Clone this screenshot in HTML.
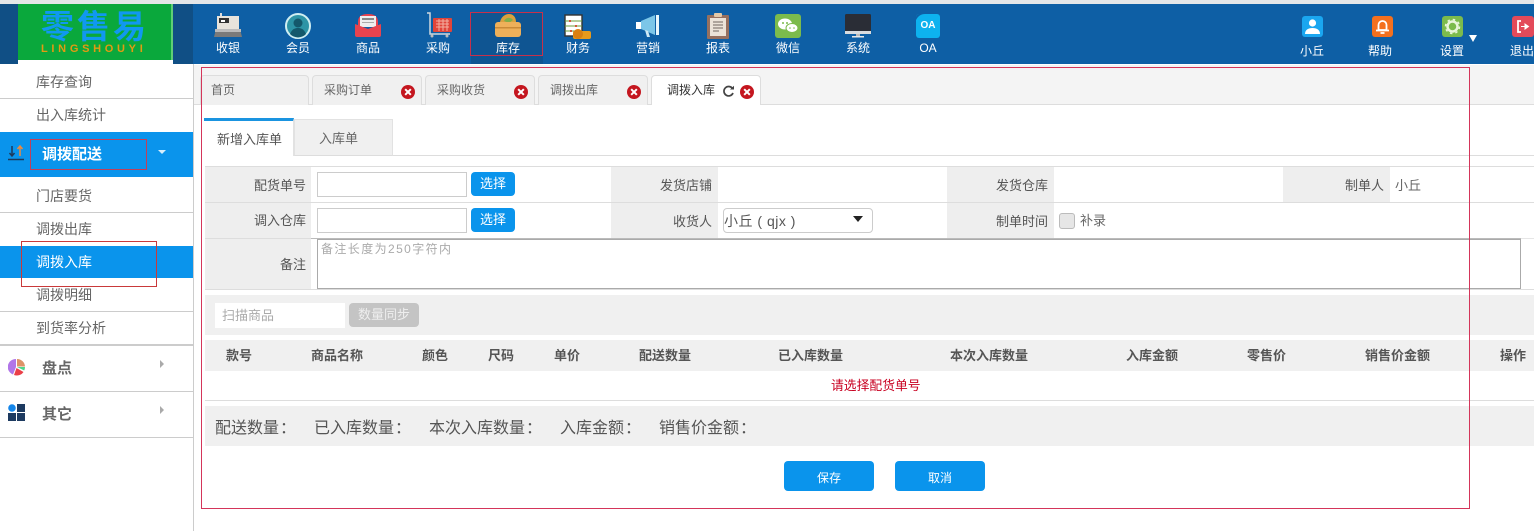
<!DOCTYPE html>
<html lang="zh"><head><meta charset="utf-8"><title>调拨入库</title>
<style>
*{box-sizing:border-box}
html,body{margin:0;padding:0;width:1534px;height:531px;overflow:hidden;background:#fff}
body{position:relative;font-family:"Liberation Sans","Noto Sans CJK SC",sans-serif;color:#555}
.a,.t,svg.i{position:absolute}
.t{white-space:nowrap;line-height:20px;height:20px}
.c{transform:translateX(-50%)}
.n{color:#fff;font-size:12px;top:38px}
.s{font-size:14px;color:#666}
.l{font-size:13px;color:#555;text-align:right}
.h{font-size:13px;font-weight:bold;color:#555;top:346px}
.m{font-size:16px;color:#555;top:416px}
.m b{font-weight:normal;font-family:"Noto Sans CJK TC",sans-serif;margin-left:1px}
.tab{position:absolute;top:75px;height:30px;background:#f0f0f0;border:1px solid #ddd;border-bottom:none;border-radius:4px 4px 0 0}
.tt{font-size:12px;color:#666;top:80px}
.btn{position:absolute;background:#0a94ec;border-radius:4px}
.x{position:absolute;top:85px;width:14px;height:14px;border-radius:50%;background:#c4161f}
.x:before,.x:after{content:"";position:absolute;left:6px;top:3px;width:2px;height:8px;background:#fff}
.x:before{transform:rotate(45deg)}.x:after{transform:rotate(-45deg)}
</style></head><body>

<!-- header -->
<div class="a" style="left:0;top:0;width:1534px;height:4px;background:#e4e6e8"></div>
<div class="a" style="left:0;top:4px;width:1534px;height:60px;background:#0e5fa5"></div>
<div class="a" style="left:0;top:4px;width:193px;height:60px;background:#104f85"></div>
<div class="a" style="left:18px;top:4px;width:153px;height:56px;background:#0aa83c"></div>
<div class="a" style="left:18px;top:60px;width:155px;height:4px;background:#fff"></div>
<div class="a" style="left:171px;top:4px;width:2px;height:56px;background:#5fce77"></div>
<div class="t" style="left:41px;top:12px;height:30px;line-height:30px;font-size:33px;font-weight:bold;color:#1098f0;letter-spacing:3px">零售易</div>
<div class="t" style="left:41px;top:41px;height:16px;line-height:16px;font-size:11px;font-weight:bold;color:#e39a12;letter-spacing:3.700px">LINGSHOUYI</div>

<div class="a" style="left:470px;top:12px;width:73px;height:44px;border:1px solid #c8304a;background:#0f5592"></div>
<div class="a" style="left:471px;top:56px;width:72px;height:8px;background:#0f5592"></div>

<!-- nav icons -->
<svg class="i" style="left:214px;top:12px" width="28" height="27" viewBox="0 0 28 27"><rect x="6" y="1" width="2" height="5" fill="#ddd"/><rect x="3" y="4" width="22" height="13" fill="#e8e4dc"/><rect x="5" y="6" width="10" height="5" fill="#333"/><rect x="7" y="8" width="4" height="2" fill="#fff"/><path d="M2 17h24l2 8H0z" fill="#7a7a7a"/><rect x="1" y="17" width="26" height="3" fill="#bbb"/></svg>
<svg class="i" style="left:285px;top:13px" width="26" height="26" viewBox="0 0 26 26"><circle cx="13" cy="13" r="12" fill="#2d94a6" stroke="#cfeef2" stroke-width="2"/><circle cx="13" cy="10" r="4.500" fill="#14586b"/><path d="M5 21c2-5 5-6 8-6s6 1 8 6a11 11 0 0 1-16 0z" fill="#14586b"/></svg>
<svg class="i" style="left:355px;top:13px" width="26" height="25" viewBox="0 0 26 25"><path d="M3 9c0-6 4-8 10-8s10 2 10 8v4H3z" fill="#e8434f"/><rect x="5" y="3" width="16" height="11" fill="#eee"/><rect x="7" y="5" width="12" height="2" fill="#888"/><rect x="7" y="9" width="12" height="1" fill="#aaa"/><path d="M0 11l13 5 13-5v11a2 2 0 0 1-2 2H2a2 2 0 0 1-2-2z" fill="#e8434f"/></svg>
<svg class="i" style="left:425px;top:12px" width="28" height="27" viewBox="0 0 28 27"><path d="M2 1h3v21h20" fill="none" stroke="#cfd8df" stroke-width="1.500"/><rect x="8" y="6" width="19" height="14" rx="1" fill="#e0453a"/><path d="M11 9h13M11 12h13M11 15h13M14 7v12M18 7v12M22 7v12" stroke="#f3b0a0" stroke-width="1"/><circle cx="7" cy="24" r="1.500" fill="#bbb"/><circle cx="22" cy="24" r="1.500" fill="#bbb"/></svg>
<svg class="i" style="left:494px;top:14px" width="28" height="24" viewBox="0 0 28 24"><path d="M6 8c1-5 5-8 9-8s7 3 7 8z" fill="#d9a13e"/><path d="M10 7c2-4 7-4 9-1l-4 3z" fill="#7fae4a"/><rect x="1" y="8" width="26" height="15" rx="3" fill="#eeb05a"/><rect x="1" y="13" width="26" height="1.500" fill="#c98a38"/></svg>
<svg class="i" style="left:564px;top:14px" width="28" height="26" viewBox="0 0 28 26"><rect x="1" y="1" width="17" height="21" fill="#fff" stroke="#333" stroke-width="1.400"/><path d="M1 7h17M1 12h17M1 17h17" stroke="#6a9c3a" stroke-width="1"/><path d="M5 7h2M11 12h2M6 17h2" stroke="#d2553a" stroke-width="2"/><rect x="9" y="17" width="18" height="8" rx="2" fill="#e79a1c"/><circle cx="14" cy="20" r="5" fill="#d97f12"/></svg>
<svg class="i" style="left:635px;top:14px" width="26" height="24" viewBox="0 0 26 24"><path d="M1 8h5v7H1z" fill="#fff"/><path d="M6 7l14-6v20L6 15z" fill="#7cc6e8"/><path d="M10 16l3 1 2 6h-3z" fill="#cfe9f5"/><rect x="21" y="1" width="3" height="20" fill="#e8f6fc"/></svg>
<svg class="i" style="left:706px;top:13px" width="24" height="26" viewBox="0 0 24 26"><rect x="1" y="2" width="22" height="24" rx="1" fill="#96705f"/><rect x="4" y="5" width="16" height="18" fill="#ece3d8"/><rect x="8" y="0" width="8" height="4" rx="1" fill="#e3c9a8"/><path d="M7 9h10M7 12h10M7 15h10M7 18h6" stroke="#8a8078" stroke-width="1.200"/></svg>
<svg class="i" style="left:775px;top:14px" width="26" height="24" viewBox="0 0 26 24"><rect width="26" height="24" rx="3" fill="#7cbb4c"/><ellipse cx="10" cy="10" rx="7" ry="5.500" fill="#fff"/><ellipse cx="17" cy="14" rx="6" ry="4.500" fill="#fff" stroke="#7cbb4c"/><circle cx="8" cy="9" r="1" fill="#7cbb4c"/><circle cx="12" cy="9" r="1" fill="#7cbb4c"/><circle cx="15" cy="14" r=".8" fill="#7cbb4c"/><circle cx="19" cy="14" r=".8" fill="#7cbb4c"/></svg>
<svg class="i" style="left:845px;top:14px" width="26" height="24" viewBox="0 0 26 24"><rect width="26" height="18" rx="1.500" fill="#2a2d36"/><rect y="17" width="26" height="3" fill="#d8dcdf"/><rect x="11" y="20" width="4" height="2" fill="#bbb"/><rect x="7" y="22" width="12" height="1.500" fill="#e8e8e8"/></svg>
<svg class="i" style="left:916px;top:14px" width="24" height="24" viewBox="0 0 24 24"><rect width="24" height="24" rx="3" fill="#0db2ef"/><path d="M0 6c2-4 5-6 9-6H3a3 3 0 0 0-3 3z" fill="#0e5fa5"/></svg>
<div class="t c" style="left:928px;top:16px;font-size:10px;font-weight:bold;color:#fff">OA</div>

<div class="t n c" style="left:228px">收银</div>
<div class="t n c" style="left:298px">会员</div>
<div class="t n c" style="left:368px">商品</div>
<div class="t n c" style="left:438px">采购</div>
<div class="t n c" style="left:508px">库存</div>
<div class="t n c" style="left:578px">财务</div>
<div class="t n c" style="left:648px">营销</div>
<div class="t n c" style="left:718px">报表</div>
<div class="t n c" style="left:788px">微信</div>
<div class="t n c" style="left:858px">系统</div>
<div class="t n c" style="left:928px">OA</div>

<!-- right icons -->
<svg class="i" style="left:1302px;top:16px" width="21" height="21" viewBox="0 0 21 21"><rect width="21" height="21" rx="3" fill="#1aa6f0"/><circle cx="10.500" cy="7" r="3.600" fill="#fff"/><path d="M3 18c0-4 3-6 7.500-6s7.500 2 7.500 6z" fill="#fff"/></svg>
<svg class="i" style="left:1372px;top:16px" width="21" height="21" viewBox="0 0 21 21"><rect width="21" height="21" rx="3" fill="#f4701e"/><path d="M6.500 14V9a4 4 0 0 1 8 0v5z" fill="none" stroke="#fff" stroke-width="1.800"/><path d="M4 14.500h13M8.500 17h4" stroke="#fff" stroke-width="1.800"/></svg>
<svg class="i" style="left:1442px;top:16px" width="21" height="21" viewBox="0 0 21 21"><rect width="21" height="21" rx="3" fill="#7cbb4c"/><circle cx="10.500" cy="10.500" r="5" fill="none" stroke="#e9f5da" stroke-width="2.500"/><circle cx="10.500" cy="10.500" r="7" fill="none" stroke="#e9f5da" stroke-width="1.500" stroke-dasharray="2.500 3"/></svg>
<svg class="i" style="left:1512px;top:16px" width="22" height="21" viewBox="0 0 22 21"><rect width="22" height="21" rx="3" fill="#e34a5a"/><path d="M9 5H6v11h3" fill="none" stroke="#fff" stroke-width="1.800"/><path d="M9 10.500h5M13 8l3.500 2.500L13 13z" fill="#fff" stroke="#fff"/></svg>
<div class="a" style="left:1469px;top:35px;border-left:4px solid transparent;border-right:4px solid transparent;border-top:7px solid #fff"></div>
<div class="t n c" style="left:1312px;top:41px">小丘</div>
<div class="t n c" style="left:1380px;top:41px">帮助</div>
<div class="t n c" style="left:1452px;top:41px">设置</div>
<div class="t n c" style="left:1522px;top:41px">退出</div>

<!-- sidebar -->
<div class="a" style="left:193px;top:64px;width:1px;height:467px;background:#ccc"></div>
<div class="t s" style="left:36px;top:72px">库存查询</div>
<div class="a" style="left:0;top:98px;width:193px;height:1px;background:#ccc"></div>
<div class="t s" style="left:36px;top:105px">出入库统计</div>
<div class="a" style="left:0;top:132px;width:193px;height:45px;background:#0a94ec"></div>
<svg class="i" style="left:8px;top:145px" width="17" height="16" viewBox="0 0 17 16"><path d="M4 1v10M1.500 8L4 11l2.500-3M0 14.500h16" fill="none" stroke="#1d3a5c" stroke-width="1.500"/><path d="M12 11V1.500M9.500 4L12 1l2.500 3" fill="none" stroke="#f08a3c" stroke-width="1.500"/></svg>
<div class="t" style="left:42px;top:145px;font-size:15px;font-weight:bold;color:#fff">调拨配送</div>
<div class="a" style="left:30px;top:139px;width:117px;height:31px;border:1px solid #c0405a"></div>
<div class="a" style="left:158px;top:150px;border-left:4px solid transparent;border-right:4px solid transparent;border-top:4px solid #d8eefc"></div>
<div class="t s" style="left:36px;top:186px">门店要货</div>
<div class="a" style="left:0;top:212px;width:193px;height:1px;background:#ccc"></div>
<div class="t s" style="left:36px;top:219px">调拨出库</div>
<div class="a" style="left:0;top:246px;width:193px;height:32px;background:#0a94ec"></div>
<div class="t s" style="left:36px;top:252px;color:#fff">调拨入库</div>
<div class="a" style="left:21px;top:241px;width:136px;height:46px;border:1px solid #c9393a"></div>
<div class="t s" style="left:36px;top:285px">调拨明细</div>
<div class="a" style="left:0;top:311px;width:193px;height:1px;background:#ccc"></div>
<div class="t s" style="left:36px;top:318px">到货率分析</div>
<div class="a" style="left:0;top:344px;width:193px;height:2px;background:#ccc"></div>
<svg class="i" style="left:8px;top:358px" width="17" height="18" viewBox="0 0 17 18"><path d="M8 9V1A8 8 0 0 0 5 16.500z" fill="#b176e8"/><path d="M9 1a8 8 0 0 1 8 7.500H9z" fill="#dd9268"/><path d="M9 9h8a8 8 0 0 1-.8 3.500z" fill="#4fd68c"/><path d="M8.500 10l7 4a8 8 0 0 1-9.500 3z" fill="#ea3f48"/></svg>
<div class="t" style="left:42px;top:359px;font-size:15px;font-weight:bold;color:#666">盘点</div>
<div class="a" style="left:160px;top:360px;border-top:4px solid transparent;border-bottom:4px solid transparent;border-left:4px solid #aaa"></div>
<div class="a" style="left:0;top:391px;width:193px;height:1px;background:#ccc"></div>
<svg class="i" style="left:8px;top:404px" width="17" height="17" viewBox="0 0 17 17"><circle cx="4" cy="4" r="3.800" fill="#1486ea"/><rect x="9" y="0" width="8" height="8" fill="#1d3a60"/><rect x="0" y="9" width="8" height="8" fill="#1d3a60"/><rect x="9" y="9" width="8" height="8" fill="#1d3a60"/></svg>
<div class="t" style="left:42px;top:405px;font-size:15px;font-weight:bold;color:#666">其它</div>
<div class="a" style="left:160px;top:406px;border-top:4px solid transparent;border-bottom:4px solid transparent;border-left:4px solid #aaa"></div>
<div class="a" style="left:0;top:437px;width:193px;height:1px;background:#ccc"></div>

<!-- tab strip -->
<div class="a" style="left:194px;top:65px;width:1340px;height:40px;background:#f4f4f4"></div>
<div class="a" style="left:194px;top:104px;width:1340px;height:1px;background:#ddd"></div>
<div class="tab" style="left:200px;width:109px"></div>
<div class="tab" style="left:312px;width:110px"></div>
<div class="tab" style="left:425px;width:110px"></div>
<div class="tab" style="left:538px;width:110px"></div>
<div class="tab" style="left:651px;width:110px;background:#fff;height:30px"></div>
<div class="t tt" style="left:211px">首页</div>
<div class="t tt" style="left:324px">采购订单</div>
<div class="t tt" style="left:437px">采购收货</div>
<div class="t tt" style="left:550px">调拨出库</div>
<div class="t tt" style="left:667px;color:#333">调拨入库</div>
<div class="x" style="left:401px"></div>
<div class="x" style="left:514px"></div>
<div class="x" style="left:627px"></div>
<div class="x" style="left:740px"></div>
<svg class="i" style="left:722px;top:85px" width="13" height="13" viewBox="0 0 13 13"><path d="M10.500 3.500A4.700 4.700 0 1 0 11 8" fill="none" stroke="#444" stroke-width="1.700"/><path d="M8 4.500h4V.8z" fill="#444"/></svg>

<!-- sub tabs -->
<div class="a" style="left:204px;top:155px;width:1330px;height:1px;background:#ddd"></div>
<div class="a" style="left:294px;top:119px;width:99px;height:37px;background:#f0f0f0;border:1px solid #e2e2e2;border-bottom:1px solid #ddd"></div>
<div class="a" style="left:204px;top:118px;width:90px;height:38px;background:#fff;border-top:3px solid #1a94e0;border-right:1px solid #e2e2e2"></div>
<div class="t" style="left:217px;top:130px;font-size:13px;color:#555">新增入库单</div>
<div class="t" style="left:319px;top:129px;font-size:13px;color:#666">入库单</div>

<!-- form -->
<div class="a" style="left:205px;top:166px;width:1329px;height:1px;background:#ddd"></div>
<div class="a" style="left:205px;top:202px;width:1329px;height:1px;background:#ddd"></div>
<div class="a" style="left:205px;top:238px;width:1316px;height:1px;background:#bbb"></div>
<div class="a" style="left:1521px;top:238px;width:13px;height:1px;background:#e6e6e6"></div>
<div class="a" style="left:205px;top:289px;width:1329px;height:1px;background:#ddd"></div>
<div class="a" style="left:205px;top:167px;width:106px;height:122px;background:#eee"></div>
<div class="a" style="left:205px;top:202px;width:106px;height:1px;background:#ddd"></div>
<div class="a" style="left:205px;top:238px;width:106px;height:1px;background:#ddd"></div>
<div class="a" style="left:611px;top:167px;width:107px;height:71px;background:#eee"></div>
<div class="a" style="left:611px;top:202px;width:107px;height:1px;background:#ddd"></div>
<div class="a" style="left:947px;top:167px;width:107px;height:71px;background:#eee"></div>
<div class="a" style="left:947px;top:202px;width:107px;height:1px;background:#ddd"></div>
<div class="a" style="left:1283px;top:167px;width:107px;height:35px;background:#eee"></div>

<div class="t l" style="left:254px;top:176px">配货单号</div>
<div class="t l" style="left:254px;top:211px">调入仓库</div>
<div class="t l" style="left:280px;top:255px">备注</div>
<div class="t l" style="left:660px;top:176px">发货店铺</div>
<div class="t l" style="left:673px;top:212px">收货人</div>
<div class="t l" style="left:996px;top:176px">发货仓库</div>
<div class="t l" style="left:996px;top:212px">制单时间</div>
<div class="t l" style="left:1345px;top:176px">制单人</div>
<div class="t l" style="left:1395px;top:176px;color:#666">小丘</div>

<div class="a" style="left:317px;top:172px;width:150px;height:25px;border:1px solid #ccc;background:#fff"></div>
<div class="a" style="left:317px;top:208px;width:150px;height:25px;border:1px solid #ccc;background:#fff"></div>
<div class="btn" style="left:471px;top:172px;width:44px;height:24px"></div>
<div class="btn" style="left:471px;top:208px;width:44px;height:24px"></div>
<div class="t c" style="left:493px;top:174px;font-size:13px;color:#fff">选择</div>
<div class="t c" style="left:493px;top:210px;font-size:13px;color:#fff">选择</div>

<div class="a" style="left:723px;top:208px;width:150px;height:25px;border:1px solid #ccc;border-radius:4px;background:#fff"></div>
<div class="t" style="left:724px;top:211px;font-size:14px;color:#555;letter-spacing:.5px">小丘 ( qjx )</div>
<div class="a" style="left:853px;top:216px;border-left:5px solid transparent;border-right:5px solid transparent;border-top:6px solid #222"></div>
<div class="a" style="left:1059px;top:213px;width:16px;height:16px;border:1px solid #bbb;border-radius:3px;background:#e6e6e6"></div>
<div class="t l" style="left:1080px;top:211px;color:#666">补录</div>

<div class="a" style="left:317px;top:239px;width:1204px;height:50px;border:1px solid #aaa;background:#fff"></div>
<div class="t" style="left:321px;top:239px;font-size:12px;color:#aaa;letter-spacing:1.400px">备注长度为250字符内</div>

<!-- scan bar -->
<div class="a" style="left:205px;top:295px;width:1329px;height:40px;background:#f0f0f0"></div>
<div class="a" style="left:215px;top:303px;width:130px;height:25px;background:#fff"></div>
<div class="t" style="left:222px;top:306px;font-size:13px;color:#aaa">扫描商品</div>
<div class="a" style="left:349px;top:303px;width:70px;height:24px;background:#c4c4c4;border-radius:4px"></div>
<div class="t c" style="left:384px;top:305px;font-size:13px;color:#eee">数量同步</div>

<!-- table -->
<div class="a" style="left:205px;top:340px;width:1329px;height:31px;background:#f0f0f0"></div>
<div class="t h" style="left:226px">款号</div>
<div class="t h" style="left:311px">商品名称</div>
<div class="t h" style="left:422px">颜色</div>
<div class="t h" style="left:488px">尺码</div>
<div class="t h" style="left:554px">单价</div>
<div class="t h" style="left:639px">配送数量</div>
<div class="t h" style="left:778px">已入库数量</div>
<div class="t h" style="left:950px">本次入库数量</div>
<div class="t h" style="left:1126px">入库金额</div>
<div class="t h" style="left:1247px">零售价</div>
<div class="t h" style="left:1365px">销售价金额</div>
<div class="t h" style="left:1500px">操作</div>
<div class="t" style="left:831px;top:376px;font-size:12.800px;color:#c80020">请选择配货单号</div>
<div class="a" style="left:205px;top:400px;width:1329px;height:1px;background:#ddd"></div>

<!-- summary -->
<div class="a" style="left:205px;top:406px;width:1329px;height:40px;background:#f0f0f0"></div>
<div class="t m" style="left:215px">配送数量<b>：</b></div>
<div class="t m" style="left:314px">已入库数量<b>：</b></div>
<div class="t m" style="left:429px">本次入库数量<b>：</b></div>
<div class="t m" style="left:560px">入库金额<b>：</b></div>
<div class="t m" style="left:659px">销售价金额<b>：</b></div>

<div class="btn" style="left:784px;top:461px;width:90px;height:30px"></div>
<div class="btn" style="left:895px;top:461px;width:90px;height:30px"></div>
<div class="t c" style="left:829px;top:468px;font-size:12px;color:#fff">保存</div>
<div class="t c" style="left:940px;top:468px;font-size:12px;color:#fff">取消</div>

<!-- red annotation frame -->
<div class="a" style="left:201px;top:67px;width:1269px;height:442px;border:1px solid #d4355a"></div>
</body></html>
